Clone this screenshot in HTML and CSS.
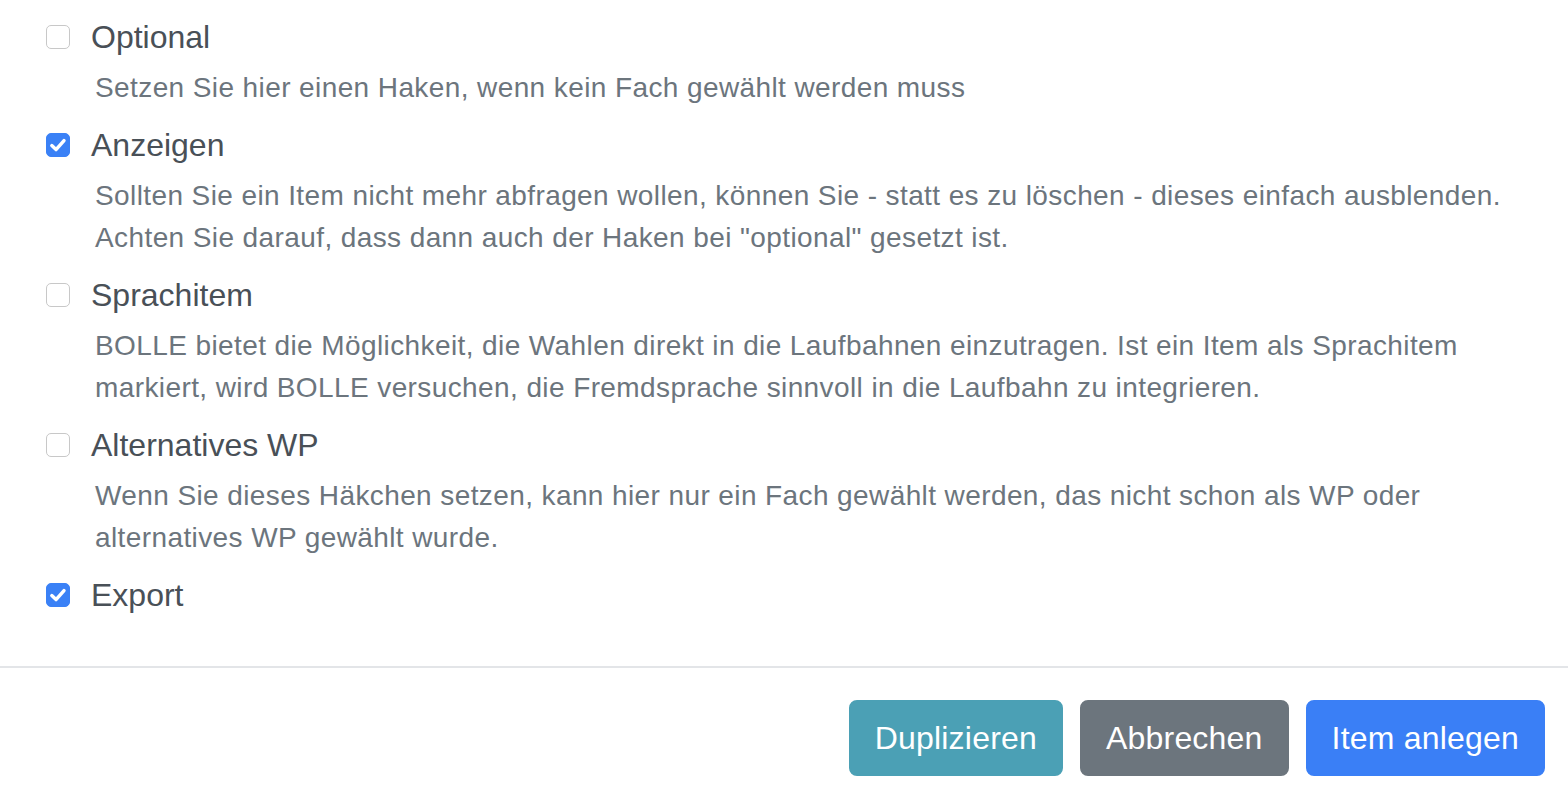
FILE: index.html
```html
<!DOCTYPE html>
<html lang="de">
<head>
<meta charset="utf-8">
<title>Item</title>
<link rel="stylesheet" href="styles.css">
</head>
<body>
<div class="modal-body">
  <div class="group">
    <div class="check-row"><span class="box"></span><label class="lbl">Optional</label></div>
    <p class="help">Setzen Sie hier einen Haken, wenn kein Fach gewählt werden muss</p>
  </div>
  <div class="group">
    <div class="check-row"><span class="box checked"><svg viewBox="0 0 24 24" width="24" height="24"><path d="M5.8 12.6 L10 16.6 L18 7.6" fill="none" stroke="#fff" stroke-width="3.4" stroke-linecap="round" stroke-linejoin="round"/></svg></span><label class="lbl">Anzeigen</label></div>
    <p class="help">Sollten Sie ein Item nicht mehr abfragen wollen, können Sie - statt es zu löschen - dieses einfach ausblenden. Achten Sie darauf, dass dann auch der Haken bei "optional" gesetzt ist.</p>
  </div>
  <div class="group">
    <div class="check-row"><span class="box"></span><label class="lbl">Sprachitem</label></div>
    <p class="help">BOLLE bietet die Möglichkeit, die Wahlen direkt in die Laufbahnen einzutragen. Ist ein Item als Sprachitem markiert, wird BOLLE versuchen, die Fremdsprache sinnvoll in die Laufbahn zu integrieren.</p>
  </div>
  <div class="group">
    <div class="check-row"><span class="box"></span><label class="lbl">Alternatives WP</label></div>
    <p class="help">Wenn Sie dieses Häkchen setzen, kann hier nur ein Fach gewählt werden, das nicht schon als WP oder alternatives WP gewählt wurde.</p>
  </div>
  <div class="group last">
    <div class="check-row"><span class="box checked"><svg viewBox="0 0 24 24" width="24" height="24"><path d="M5.8 12.6 L10 16.6 L18 7.6" fill="none" stroke="#fff" stroke-width="3.4" stroke-linecap="round" stroke-linejoin="round"/></svg></span><label class="lbl">Export</label></div>
  </div>
</div>
<div class="modal-footer">
  <button class="btn btn-info">Duplizieren</button>
  <button class="btn btn-secondary">Abbrechen</button>
  <button class="btn btn-primary">Item anlegen</button>
</div>
</body>
</html>
```
FILE: styles.css
```css
html, body {
  margin: 0;
  padding: 0;
  background: #fff;
  font-family: "Liberation Sans", Arial, sans-serif;
}
.modal-body {
  padding: 13px 28px 47px 46px;
}
.group {
  margin-bottom: 12px;
}
.group.last {
  margin-bottom: 0;
}
.check-row {
  display: flex;
  align-items: center;
  height: 48px;
}
.box {
  width: 22px;
  height: 22px;
  border: 1px solid #c8c8c8;
  border-radius: 5px;
  background: #fff;
  margin-right: 21px;
  display: flex;
  align-items: center;
  justify-content: center;
  box-sizing: content-box;
  flex: none;
}
.box.checked {
  background: #3a81f6;
  border-color: #3a81f6;
}
.box svg {
  display: block;
  flex: none;
}
.lbl {
  font-size: 32px;
  line-height: 48px;
  color: #495057;
}
.help {
  margin: 6px 0 0 49px;
  font-size: 28px;
  line-height: 42px;
  letter-spacing: 0.4px;
  color: #6c757d;
}
.modal-footer {
  border-top: 2px solid #e3e5e8;
  display: flex;
  justify-content: flex-end;
  gap: 17px;
  padding: 32px 23px 22px 0;
}
.btn {
  font-family: "Liberation Sans", Arial, sans-serif;
  font-size: 32px;
  line-height: 48px;
  letter-spacing: 0.2px;
  padding: 12px 24px;
  border: 2px solid transparent;
  border-radius: 8px;
  color: #fff;
  cursor: pointer;
}
.btn-info {
  background: #4ba0b5;
  border-color: #4ba0b5;
}
.btn-secondary {
  background: #6c757d;
  border-color: #6c757d;
}
.btn-primary {
  background: #3a7ff6;
  border-color: #3a7ff6;
}
```
